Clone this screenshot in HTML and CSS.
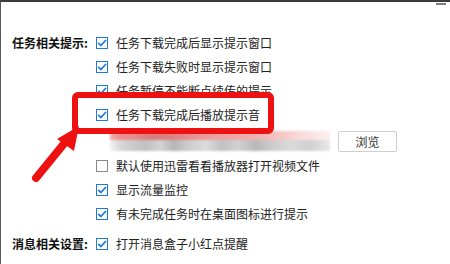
FILE: index.html
```html
<!DOCTYPE html>
<html lang="zh-CN">
<head>
<meta charset="utf-8">
<link rel="stylesheet" href="styles.css">
</head>
<body>
<div class="window">
  <div class="titlebar"><span class="min"></span></div>
  <div class="section">
    <div class="label">任务相关提示:</div>
    <div class="rows">
      <div class="row"><span class="cb on"><svg viewBox="0 0 10 10"><path d="M1.3 4.9 L3.9 7.6 L8.9 2"/></svg></span><span class="txt">任务下载完成后显示提示窗口</span></div>
      <div class="row"><span class="cb on"><svg viewBox="0 0 10 10"><path d="M1.3 4.9 L3.9 7.6 L8.9 2"/></svg></span><span class="txt">任务下载失败时显示提示窗口</span></div>
      <div class="row"><span class="cb on"><svg viewBox="0 0 10 10"><path d="M1.3 4.9 L3.9 7.6 L8.9 2"/></svg></span><span class="txt">任务暂停不能断点续传的提示</span></div>
      <div class="row"><span class="cb on"><svg viewBox="0 0 10 10"><path d="M1.3 4.9 L3.9 7.6 L8.9 2"/></svg></span><span class="txt">任务下载完成后播放提示音</span></div>
      <div class="row input-row">
        <div class="mosaic"></div>
        <button class="btn">浏览</button>
      </div>
      <div class="row"><span class="cb"></span><span class="txt">默认使用迅雷看看播放器打开视频文件</span></div>
      <div class="row"><span class="cb on"><svg viewBox="0 0 10 10"><path d="M1.3 4.9 L3.9 7.6 L8.9 2"/></svg></span><span class="txt">显示流量监控</span></div>
      <div class="row"><span class="cb on"><svg viewBox="0 0 10 10"><path d="M1.3 4.9 L3.9 7.6 L8.9 2"/></svg></span><span class="txt">有未完成任务时在桌面图标进行提示</span></div>
    </div>
  </div>
  <div class="section s2">
    <div class="label">消息相关设置:</div>
    <div class="rows">
      <div class="row"><span class="cb on"><svg viewBox="0 0 10 10"><path d="M1.3 4.9 L3.9 7.6 L8.9 2"/></svg></span><span class="txt">打开消息盒子小红点提醒</span></div>
    </div>
  </div>
  <div class="annot-box"></div>
  <svg class="arrow" viewBox="0 0 449 262">
    <line x1="35" y1="176" x2="66" y2="138"/>
    <polygon points="56,137 78,124 73,149"/>
  </svg>
</div>
</body>
</html>
```

FILE: styles.css
```css
* { box-sizing: border-box; }
html, body { margin: 0; padding: 0; background: #fff; }
body {
  width: 450px;
  height: 264px;
  overflow: hidden;
  font-family: "Noto Sans CJK SC", "Microsoft YaHei", sans-serif;
  font-size: 12px;
  color: #222;
}
.window {
  position: relative;
  width: 450px;
  height: 264px;
  border-top: 2px solid #3b3b3b;
  border-left: 1px solid #5a5a5a;
  background: #fff;
}
.titlebar {
  height: 29px;
  display: flex;
  justify-content: flex-end;
  align-items: flex-start;
}
.min {
  width: 10px;
  height: 2px;
  margin-top: 1px;
  margin-right: 4px;
  background: #7d7d7d;
}
.section {
  display: flex;
  padding-left: 11px;
}
.s2 { margin-top: 6px; }
.label {
  width: 84px;
  height: 24px;
  line-height: 24px;
  font-weight: bold;
  color: #111;
  white-space: nowrap;
}
.rows { display: flex; flex-direction: column; }
.row {
  height: 24px;
  display: flex;
  align-items: center;
  white-space: nowrap;
}
.cb {
  width: 12px;
  height: 12px;
  margin-right: 8px;
  border: 1px solid #8a8a8a;
  background: #fff;
  display: flex;
  flex: none;
}
.cb.on { border-color: #1e78d6; }
.cb svg { width: 10px; height: 10px; display: block; }
.cb path {
  fill: none;
  stroke: #1e78d6;
  stroke-width: 1.7;
}
.txt { line-height: 24px; }
.input-row { height: 27px; align-items: flex-start; }
.mosaic {
  margin-left: 14px;
  width: 220px;
  height: 20px;
  margin-top: 4px;
  filter: blur(1px);
  background:
    linear-gradient(90deg, #f4aaaa 0, #ee9090 10px, #e98a8a 24px, #d87a7a 44px, #e08484 66px, #ec9c9c 96px, #f0a8a8 126px, #f3b8b8 156px, #f6c8c8 172px, #fadcdc 192px, #fdeeee 220px) top left / 100% 9px no-repeat,
    linear-gradient(90deg, #f4f4f4 0, #dcdcdc 8px, #cacaca 22px, #c0c0c0 36px, #d4d4d4 50px, #b6b6b6 64px, #cecece 80px, #dcdcdc 96px, #c2c2c2 112px, #d2d2d2 128px, #b8b8b8 146px, #cccccc 162px, #dadada 180px, #d0d0d0 200px, #e8e8e8 220px) bottom left / 100% 11px no-repeat;
}
.btn {
  margin-left: 8px;
  width: 59px;
  height: 21px;
  margin-top: 4px;
  padding: 0;
  border: 1px solid #cfcfcf;
  border-radius: 2px;
  background: #fff;
  font-family: inherit;
  font-size: 12px;
  color: #333;
}
.annot-box {
  position: absolute;
  left: 71px;
  top: 90px;
  width: 202px;
  height: 42px;
  border: 6px solid #ee1111;
  border-radius: 6px;
}
.arrow {
  position: absolute;
  left: 0;
  top: 0;
  width: 449px;
  height: 262px;
  pointer-events: none;
}
.arrow line {
  stroke: #ee1111;
  stroke-width: 8;
  stroke-linecap: round;
}
.arrow polygon { fill: #ee1111; }
```
